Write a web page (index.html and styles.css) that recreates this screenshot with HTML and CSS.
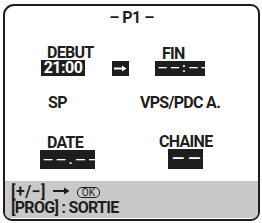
FILE: index.html
```html
<!DOCTYPE html>
<html lang="fr">
<head>
    <meta charset="UTF-8">
    <meta name="viewport" content="width=device-width, initial-scale=1.0">
    <title>Programmation P1</title>
    <link rel="stylesheet" href="styles.css">
</head>
<body>
    <div class="screen">
        <div class="title">– P1 –</div>

        <div class="row row-time">
            <div class="group start">
                <div class="label">DEBUT</div>
                <div class="box">21:00</div>
            </div>
            <div class="box arrow">
                <svg width="13" height="7" viewBox="0 0 13 7">
                    <path d="M0 3.5 H9" stroke="#fff" stroke-width="2"/>
                    <path d="M8 0.5 L12.5 3.5 L8 6.5 Z" fill="#fff"/>
                </svg>
            </div>
            <div class="group end">
                <div class="label">FIN</div>
                <div class="box dashes">——:——</div>
            </div>
        </div>

        <div class="row row-mode">
            <div class="mode sp">SP</div>
            <div class="mode vps">VPS/PDC A.</div>
        </div>

        <div class="row row-date">
            <div class="group date">
                <div class="label">DATE</div>
                <div class="box dashes wide">——.——</div>
            </div>
            <div class="group chaine">
                <div class="label">CHAINE</div>
                <div class="box dashes small">——</div>
            </div>
        </div>

        <div class="footer">
            <div class="hint keys">
                [+/−]
                <svg class="to" width="17" height="8" viewBox="0 0 17 8">
                    <path d="M0 4 H12" stroke="#1e1e1e" stroke-width="2"/>
                    <path d="M11 0.5 L16.5 4 L11 7.5 Z" fill="#1e1e1e"/>
                </svg>
                <span class="ok">OK</span>
            </div>
            <div class="hint">[PROG] : SORTIE</div>
        </div>
    </div>
</body>
</html>
```

FILE: styles.css
```css
body {
    margin: 0;
    padding: 0;
    background: #fff;
    font-family: Roboto, "Liberation Sans", sans-serif;
    font-weight: bold;
    color: #1e1e1e;
}
.screen {
    box-sizing: border-box;
    width: 257px;
    height: 217px;
    margin: 4px 0 0 3px;
    border: 2px solid #1e1e1e;
    border-radius: 11px 9px 9px 9px;
    overflow: hidden;
    display: flex;
    flex-direction: column;
}
.title {
    text-align: center;
    font-size: 16px;
    line-height: 17px;
    letter-spacing: -0.5px;
    margin-top: 3px;
}
.row {
    display: flex;
    align-items: flex-end;
}
.label,
.mode {
    font-size: 16px;
    line-height: 15px;
    letter-spacing: -0.7px;
}
.box {
    background: #1e1e1e;
    color: #fff;
    font-size: 16px;
    line-height: 16px;
    height: 16px;
    letter-spacing: -0.5px;
    text-align: center;
    white-space: nowrap;
}
.row-time {
    margin-top: 19px;
}
.start {
    width: 71px;
    margin-left: 36px;
}
.start .label {
    margin-left: 6px;
}
.start .box {
    width: 44px;
}
.arrow {
    width: 17px;
    height: 15px;
    display: flex;
    align-items: center;
    justify-content: center;
}
.end {
    margin-left: 26px;
}
.end .label {
    margin-left: 7px;
}
.end .box {
    width: 50px;
    height: 15px;
    line-height: 15px;
}
.dashes {
    font-size: 12px;
    letter-spacing: 3px;
    text-indent: 3px;
}
.row-mode {
    margin-top: 19px;
}
.sp {
    width: 92px;
    margin-left: 43px;
}
.row-date {
    margin-top: 24px;
}
.date {
    width: 119px;
    margin-left: 35px;
}
.date .label {
    margin-left: 7px;
}
.wide {
    width: 55px;
    height: 19px;
    line-height: 19px;
    font-size: 13px;
    letter-spacing: 3px;
    text-indent: 3px;
}
.small {
    width: 35px;
    height: 20px;
    line-height: 20px;
    margin-left: 9px;
    font-size: 16px;
    letter-spacing: 4px;
    text-indent: 4px;
}
.footer {
    margin-top: auto;
    margin-bottom: 1px;
    background: #c9c9c9;
    height: 37px;
    padding: 3px 0 0 6px;
    box-sizing: border-box;
}
.hint {
    font-size: 16px;
    line-height: 16px;
    letter-spacing: -0.7px;
}
.keys {
    letter-spacing: 0.5px;
}
.to {
    vertical-align: 2px;
    margin: 0 2px 0 3px;
}
.ok {
    display: inline-block;
    font-size: 10px;
    line-height: 9px;
    padding: 0 4px;
    border: 1px solid #1e1e1e;
    border-radius: 5px;
    font-weight: normal;
    letter-spacing: 0;
    vertical-align: 1px;
}
```
